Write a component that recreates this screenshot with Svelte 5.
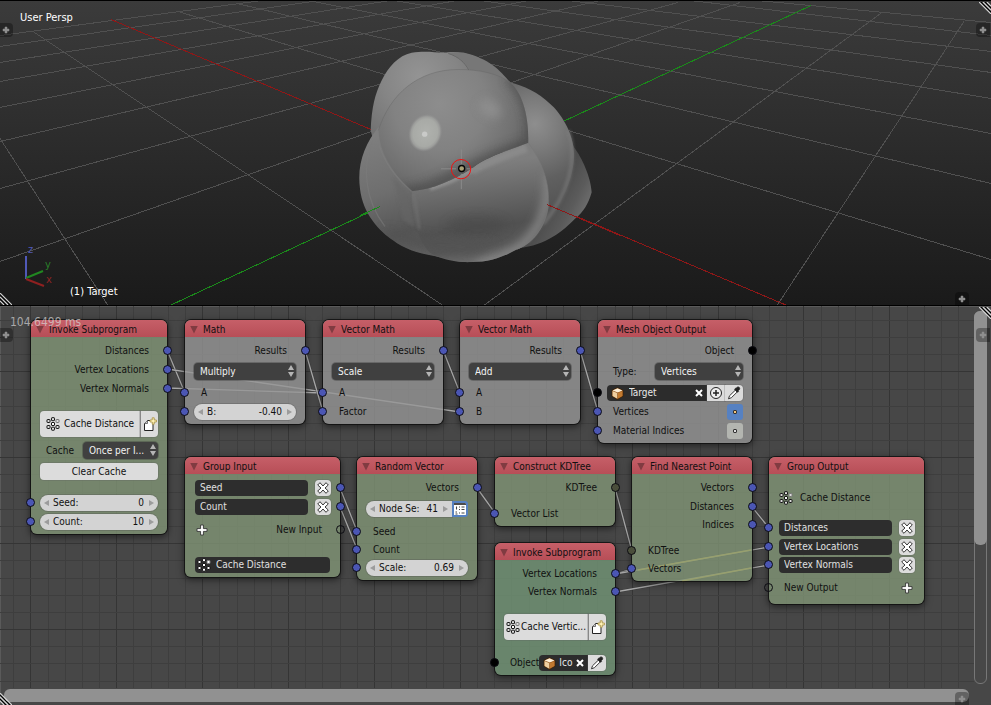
<script>
  const nodes = [
    { id: 'invoke-distance', title: 'Invoke Subprogram', x: 31, y: 14, w: 136, tone: 'green', rows: [
      { t: 'out', label: 'Distances', s: 'blue' },
      { t: 'out', label: 'Vertex Locations', s: 'blue' },
      { t: 'out', label: 'Vertex Normals', s: 'blue' },
      { t: 'program', label: 'Cache Distance', m: 14 },
      { t: 'select', label: 'Cache', value: 'Once per I...', m: 5 },
      { t: 'button', label: 'Clear Cache', m: 4 },
      { t: 'number', label: 'Seed:', value: '0', s: 'blue', m: 15 },
      { t: 'number', label: 'Count:', value: '10', s: 'blue' } ] },
    { id: 'math', title: 'Math', x: 185, y: 14, w: 120, tone: 'grey', rows: [
      { t: 'out', label: 'Results', s: 'blue' },
      { t: 'select', value: 'Multiply', m: 4 },
      { t: 'in', label: 'A', s: 'blue', m: 5 },
      { t: 'number', label: 'B:', value: '-0.40', s: 'blue' } ] },
    { id: 'vector-scale', title: 'Vector Math', x: 323, y: 14, w: 120, tone: 'grey', rows: [
      { t: 'out', label: 'Results', s: 'blue' },
      { t: 'select', value: 'Scale', m: 4 },
      { t: 'in', label: 'A', s: 'blue', m: 5 },
      { t: 'in', label: 'Factor', s: 'blue' } ] },
    { id: 'vector-add', title: 'Vector Math', x: 460, y: 14, w: 120, tone: 'grey', rows: [
      { t: 'out', label: 'Results', s: 'blue' },
      { t: 'select', value: 'Add', m: 4 },
      { t: 'in', label: 'A', s: 'blue', m: 5 },
      { t: 'in', label: 'B', s: 'blue' } ] },
    { id: 'mesh-output', title: 'Mesh Object Output', x: 598, y: 14, w: 154, tone: 'grey', rows: [
      { t: 'out', label: 'Object', s: 'black' },
      { t: 'select', label: 'Type:', value: 'Vertices', m: 4 },
      { t: 'object', value: 'Target', s: 'black', add: true, m: 5 },
      { t: 'toggle', label: 'Vertices', s: 'blue', on: true },
      { t: 'toggle', label: 'Material Indices', s: 'blue', on: false } ] },
    { id: 'group-input', title: 'Group Input', x: 185, y: 151, w: 155, tone: 'green', rows: [
      { t: 'field', value: 'Seed', out: 'blue' },
      { t: 'field', value: 'Count', out: 'blue' },
      { t: 'newin', label: 'New Input', s: 'empty', m: 7 },
      { t: 'name', value: 'Cache Distance', m: 19 } ] },
    { id: 'random-vector', title: 'Random Vector', x: 357, y: 151, w: 120, tone: 'green', rows: [
      { t: 'out', label: 'Vectors', s: 'blue' },
      { t: 'number', label: 'Node Se:', value: '41', list: true, m: 5 },
      { t: 'in', label: 'Seed', s: 'blue', m: 7 },
      { t: 'in', label: 'Count', s: 'blue', m: 2 },
      { t: 'number', label: 'Scale:', value: '0.69', s: 'blue', m: 2 } ] },
    { id: 'kdtree', title: 'Construct KDTree', x: 495, y: 151, w: 120, tone: 'green', rows: [
      { t: 'out', label: 'KDTree', s: 'olive' },
      { t: 'in', label: 'Vector List', s: 'blue', m: 10 } ] },
    { id: 'nearest', title: 'Find Nearest Point', x: 632, y: 151, w: 120, tone: 'green', rows: [
      { t: 'out', label: 'Vectors', s: 'blue' },
      { t: 'out', label: 'Distances', s: 'blue' },
      { t: 'out', label: 'Indices', s: 'blue', m: 2 },
      { t: 'in', label: 'KDTree', s: 'olive', m: 10 },
      { t: 'in', label: 'Vectors', s: 'blue', m: 2 } ] },
    { id: 'invoke-vertices', title: 'Invoke Subprogram', x: 495, y: 237, w: 120, tone: 'teal', rows: [
      { t: 'out', label: 'Vertex Locations', s: 'blue' },
      { t: 'out', label: 'Vertex Normals', s: 'blue', m: 2 },
      { t: 'program', label: 'Cache Vertic...', m: 14 },
      { t: 'object', label: 'Object', value: 'Ico', s: 'black', m: 15 } ] },
    { id: 'group-output', title: 'Group Output', x: 769, y: 151, w: 155, tone: 'green', roomy: true, rows: [
      { t: 'caption', label: 'Cache Distance', m: 13 },
      { t: 'field', value: 'Distances', s: 'blue', m: 14 },
      { t: 'field', value: 'Vertex Locations', s: 'blue' },
      { t: 'field', value: 'Vertex Normals', s: 'blue', m: 2 },
      { t: 'newout', label: 'New Output', s: 'empty', m: 7 } ] },
  ];

  // Links between sockets, in canvas coordinates: x1, y1, x2, y2
  const links = [
    [167, 44, 185, 87], [167, 63, 460, 106], [167, 82, 323, 87],
    [305, 44, 323, 106], [443, 44, 460, 87], [580, 44, 598, 106],
    [340, 182, 357, 225], [340, 201, 357, 243], [477, 182, 495, 207],
    [615, 182, 632, 245], [752, 201, 769, 222],
    [615, 268, 632, 263], [615, 268, 769, 241], [615, 286, 769, 259],
  ];

  // Stretches of a link that run underneath a node
  const covered = [[638, 264, 751, 244], [682, 275, 751, 262]];

  // Floor of the 3D view: both families of parallel lines in perspective
  const floor = [
    [0, 261, 740, 2], [0, 188, 678, 2], [0, 141, 600, 0], [0, 107, 528, 0],
    [0, 81, 457, 0], [0, 62, 390, 0], [0, 46, 319, 0], [0, 35, 262, 0],
    [777, 305, 964, 21], [443, 335, 882, 12],
    [0, 138, 108, 305], [33, 31, 330, 229], [330, 229, 443, 305], [178, 11, 991, 259],
    [237, 3, 991, 183], [308, 0, 991, 133], [394, 0, 991, 98],
    [480, 0, 991, 72], [568, 0, 991, 51], [690, 0, 991, 35], [757, 0, 991, 22],
  ];

  const step = 17.18;
  const cols = Array.from({ length: 120 }, (_, i) => ({ p: Math.round(13.2 + i * step), major: i % 5 === 1 }));
  const lines = Array.from({ length: 60 }, (_, i) => ({ p: Math.round(13.8 + i * step), major: i % 5 === 3 }));
</script>

{#snippet socket(kind, side)}
  <span class="socket {kind} {side}"></span>
{/snippet}

{#snippet tree(dark)}
  <svg class="ico" width="14" height="14" viewBox="0 0 14 14" aria-hidden="true">
    {#each [[1, 2.5], [1, 8.5], [5.5, .7], [5.5, 5.5], [5.5, 10.2], [10, 2.5], [10, 8.5]] as [x, y], i}
      <rect {x} {y} width="3" height="3" rx=".5" fill={dark || i === 3 ? '#fff' : '#ddd'} stroke={i === 5 ? '#777' : '#151515'} stroke-width="1" />
    {/each}
  </svg>
{/snippet}

{#snippet cross()}
  <svg class="ico" width="14" height="14" viewBox="0 0 14 14" aria-hidden="true">
    <path d="M4 1.7 7 5 10 1.7 12.3 4 9 7l3.3 3-2.3 2.3L7 9l-3 3.3L1.7 10 5 7 1.7 4z" fill="#fff" stroke="#222" stroke-width=".9" stroke-linejoin="round" />
  </svg>
{/snippet}

{#snippet plus()}
  <svg class="ico" width="12" height="12" viewBox="0 0 12 12" aria-hidden="true">
    <path d="M4.6 1h2.8v3.6H11v2.8H7.4V11H4.6V7.4H1V4.6h3.6z" fill="#fff" stroke="#333" stroke-width=".9" />
  </svg>
{/snippet}

{#snippet cube()}
  <svg class="ico" width="13" height="13" viewBox="0 0 13 13" aria-hidden="true">
    <path d="M6.5.8 12 3.2v6L6.5 12.4 1 9.2v-6z" fill="#8a4d16" stroke="#3a2108" stroke-width=".8" />
    <path d="M6.5 1.3 11.5 3.4 6.8 5.6 1.5 3.4z" fill="#fff0d8" />
    <path d="M1.5 3.9 6.3 6v5.7L1.5 8.9z" fill="#efcfa0" />
    <path d="M7 6.1l4.5-2.2v5L7 11.6z" fill="#c27a30" />
  </svg>
{/snippet}

{#snippet dropper()}
  <svg class="ico" width="14" height="14" viewBox="0 0 14 14" aria-hidden="true">
    <path d="M8.3 4.2 10.2 6 4.4 11.7l-2.9 1.1 1-3z" fill="#fff" stroke="#222" stroke-width=".9" />
    <path d="M9.3 1.9c1-1.2 2.3-1.3 3-.5s.5 2-.6 2.9l-.6.5.5.6-1 .9L7.5 3.2l1-.9.5.3z" fill="#222" stroke="#111" stroke-width=".6" />
  </svg>
{/snippet}

{#snippet corner(cls)}
  <svg class="corner {cls}" width="12" height="12" viewBox="0 0 12 12" aria-hidden="true">
    <path d="M0 0 12 12M4 0l8 8M8 0l4 4" stroke="#d8d8d8" stroke-width="1.1" />
    <path d="M2 0 12 10M6 0 12 6" stroke="#000" stroke-width="1" />
  </svg>
{/snippet}

{#snippet tab(cls, label)}
  <button class="tab {cls}" aria-label={label}>
    <svg width="8" height="8" viewBox="0 0 8 8" aria-hidden="true"><path d="M3 1h2v2h2v2H5v2H3V5H1V3h2z" fill="currentColor" stroke="currentColor" stroke-width=".5" /></svg>
  </button>
{/snippet}

<main>
  <section class="view" aria-label="3D view">
    <svg class="scene" viewBox="0 0 991 305" preserveAspectRatio="xMidYMid slice" aria-hidden="true">
      <defs>
        <radialGradient id="main" gradientUnits="userSpaceOnUse" cx="330" cy="220" r="310">
          <stop offset="0" stop-color="#8d8d8d" /><stop offset=".45" stop-color="#828282" />
          <stop offset=".75" stop-color="#707070" /><stop offset="1" stop-color="#5c5c5c" />
        </radialGradient>
        <radialGradient id="back" gradientUnits="userSpaceOnUse" cx="270" cy="140" r="230">
          <stop offset="0" stop-color="#949494" /><stop offset=".5" stop-color="#858585" /><stop offset="1" stop-color="#707070" />
        </radialGradient>
        <radialGradient id="right" gradientUnits="userSpaceOnUse" cx="615" cy="280" r="260">
          <stop offset="0" stop-color="#8e8e8e" /><stop offset=".3" stop-color="#7a7a7a" />
          <stop offset=".65" stop-color="#606060" /><stop offset="1" stop-color="#545454" />
        </radialGradient>
        <linearGradient id="low" gradientUnits="userSpaceOnUse" x1="400" y1="410" x2="440" y2="695">
          <stop offset="0" stop-color="#7e7e7e" /><stop offset=".3" stop-color="#696969" />
          <stop offset=".65" stop-color="#515151" /><stop offset=".85" stop-color="#575757" /><stop offset="1" stop-color="#6c6c6c" />
        </linearGradient>
        <linearGradient id="side" gradientUnits="userSpaceOnUse" x1="130" y1="320" x2="240" y2="680">
          <stop offset="0" stop-color="#7e7e7e" /><stop offset=".45" stop-color="#6e6e6e" /><stop offset=".8" stop-color="#555" /><stop offset="1" stop-color="#606060" />
        </linearGradient>
        <linearGradient id="far" gradientUnits="userSpaceOnUse" x1="640" y1="500" x2="770" y2="570">
          <stop offset="0" stop-color="#454545" /><stop offset=".6" stop-color="#5b5b5b" /><stop offset="1" stop-color="#747474" />
        </linearGradient>
        <radialGradient id="shine"><stop offset="0" stop-color="#b0b2ae" /><stop offset=".72" stop-color="#a8aaa6" /><stop offset=".85" stop-color="#9c9d9b" /><stop offset="1" stop-color="#8c8c8c" stop-opacity="0" /></radialGradient>
        <filter id="soft" x="-60%" y="-60%" width="220%" height="220%"><feGaussianBlur stdDeviation="15" /></filter>
        <filter id="edge" x="-60%" y="-30%" width="220%" height="160%"><feGaussianBlur stdDeviation="5" /></filter>
        <clipPath id="mainClip"><path d="M145 300C180 190 265 117 385 117C450 117 505 130 540 155C575 185 597 250 595 337C520 365 470 380 430 410C370 450 310 475 245 482C190 430 150 370 145 300Z" /></clipPath>
        <clipPath id="lowClip"><path d="M245 482C310 475 370 450 430 410C470 380 520 365 595 337C640 400 660 460 655 530C645 600 600 645 560 657C500 690 460 695 415 695C370 695 345 686 320 678C265 655 245 560 245 482Z" /></clipPath>
        <clipPath id="bodyClip"><path d="M145 290C105 340 80 400 90 475C98 550 150 605 190 630C220 655 270 670 320 678C370 688 390 695 415 695C460 695 500 690 560 657L600 400Z" /></clipPath>
      </defs>
      <g stroke="#505050" stroke-width="1" shape-rendering="crispEdges">
        {#each floor as [x1, y1, x2, y2]}<line {x1} {y1} {x2} {y2} />{/each}
      </g>
      <g stroke-width="1" shape-rendering="crispEdges">
        <line x1="111" y1="19" x2="787" y2="305" stroke="#8f1717" />
        <line x1="170" y1="305" x2="811" y2="5" stroke="#1a8a1a" />
      </g>
      <g transform="translate(330 30) scale(.33333)">
        <path fill="url(#far)" d="M722 325L732 350C755 380 783 440 785 485C775 520 760 545 735 565C700 600 650 645 565 653L560 500Z" />
        <path fill="url(#right)" d="M440 120C500 115 510 150 540 155C580 165 625 185 660 220C690 245 735 310 732 380C730 450 690 540 600 640L560 500Z" />
        <path d="M715 300C745 390 715 490 640 580" fill="none" stroke="#808080" stroke-width="12" filter="url(#edge)" opacity=".5" />
        <path fill="url(#back)" d="M122 300C125 230 135 190 155 150C175 110 205 75 245 67C290 60 320 68 350 66C400 60 440 78 470 97C500 115 520 140 540 155L400 300L130 330Z" />
        <path d="M350 66C385 76 405 95 420 119L540 155C510 120 480 85 400 66Z" fill="#777" />
        <path d="M355 69C385 78 405 97 416 118" fill="none" stroke="#666" stroke-width="3" />
        <path fill="url(#side)" d="M145 290C105 340 80 400 90 475C98 550 150 605 190 630C220 655 270 670 320 678C370 688 390 695 415 695L400 450L200 350Z" />
        <path d="M128 330C95 410 105 510 165 588" fill="none" stroke="#7c7c7c" stroke-width="4" opacity=".6" />
        <g clip-path="url(#lowClip)">
          <path d="M240 330H670V700H240Z" fill="url(#low)" />
          <ellipse cx="440" cy="585" rx="90" ry="28" fill="#484848" filter="url(#soft)" opacity=".6" />
          <path d="M300 474C360 454 390 442 425 418" stroke="#a0a0a0" stroke-width="14" fill="none" filter="url(#edge)" opacity=".6" />
          <path d="M425 422C480 388 530 375 590 352" stroke="#959595" stroke-width="26" fill="none" filter="url(#edge)" opacity=".5" />
          <path d="M657 430C660 580 590 680 440 699" stroke="#888" stroke-width="26" fill="none" filter="url(#soft)" />
        </g>
        <g clip-path="url(#bodyClip)">
          <path d="M150 595C240 600 300 625 350 620L500 640L450 672C330 672 230 650 190 620Z" fill="#525252" filter="url(#soft)" opacity=".8" />
          <path d="M190 440L236 490L256 590L220 570Z" fill="#666" filter="url(#edge)" opacity=".6" />
          <path d="M252 490L268 596" stroke="#747474" stroke-width="8" fill="none" filter="url(#edge)" opacity=".6" />
        </g>
        <g clip-path="url(#mainClip)">
          <path d="M130 100H610V500H130Z" fill="url(#main)" />
          <path d="M535 140C600 210 610 280 598 340" fill="none" stroke="#4b4b4b" stroke-width="24" filter="url(#soft)" opacity=".75" />
          <path d="M220 488C340 476 410 396 600 341" fill="none" stroke="#444" stroke-width="36" filter="url(#soft)" opacity=".65" />
          <ellipse cx="480" cy="235" rx="36" ry="24" fill="#919191" filter="url(#soft)" opacity=".8" transform="rotate(35 480 235)" />
        </g>
        <path d="M145 300C180 190 265 117 385 117C450 117 505 130 540 155" fill="none" stroke="#666" stroke-width="3" opacity=".45" />
        <path d="M148 345C165 400 195 440 245 482" fill="none" stroke="#808080" stroke-width="4" opacity=".5" />
        <path d="M595 337C640 400 660 460 655 530C645 590 610 635 560 657" fill="none" stroke="#777" stroke-width="3" opacity=".6" />
        <ellipse cx="286" cy="307" rx="50" ry="58" fill="url(#shine)" transform="rotate(22 286 307)" />
        <circle cx="284" cy="311" r="8" fill="#c9cac8" />
        <path d="M333 415H378M410 415H456M394 357V402M394 430V476" stroke="#8b8b8b" stroke-width="3" />
        <circle cx="393" cy="416" r="29" fill="none" stroke="#f01010" stroke-width="3" />
        <circle cx="395" cy="414" r="9" fill="#a8a078" stroke="#050505" stroke-width="4" />
      </g>
      <g stroke-width="1" shape-rendering="crispEdges">
        <line x1="360" y1="215" x2="380" y2="206" stroke="#1a8a1a" />
        <line x1="547" y1="204" x2="620" y2="235" stroke="#8f1717" />
      </g>
    </svg>
    <span class="persp">User Persp</span>
    <svg class="axes" width="34" height="48" viewBox="0 -4 34 48" aria-hidden="true">
      <path d="M6 11v23" stroke="#5059b8" stroke-width="2" />
      <path d="m6 33 17-7" stroke="#218721" stroke-width="2" />
      <path d="m6 34 18 7" stroke="#8f2020" stroke-width="2" />
      <text x="8" y="8" fill="#5059b8">z</text>
      <text x="25" y="23" fill="#2a802a">y</text>
      <text x="26" y="38" fill="#8f2525">x</text>
    </svg>
    <span class="target">(1) Target</span>
    {@render tab('left', 'Open tools')}
    {@render tab('right', 'Open properties')}
    {@render tab('foot', 'Open header')}
    {@render corner('ne')}
    {@render corner('sw')}
  </section>

  <section class="editor" aria-label="Node editor">
    <svg class="wires" aria-hidden="true">
      <g shape-rendering="crispEdges">
        {#each cols as c}<line x1={c.p} x2={c.p} y1="0" y2="100%" stroke={c.major ? '#353535' : '#3e3e3e'} />{/each}
        {#each lines as l}<line y1={l.p} y2={l.p} x1="0" x2="100%" stroke={l.major ? '#353535' : '#3e3e3e'} />{/each}
      </g>
      {#each links as [x1, y1, x2, y2]}
        <line {x1} {y1} {x2} {y2} stroke="#333" stroke-width="2.5" opacity=".5" />
        <line {x1} {y1} {x2} {y2} stroke="#aaa" stroke-width="1.3" />
      {/each}
      {#each covered as [x1, y1, x2, y2]}
        <line {x1} {y1} {x2} {y2} stroke="#f0c850" stroke-width="1.5" />
      {/each}
    </svg>

    {#each nodes as n (n.id)}
      <article class="node {n.tone}" class:roomy={n.roomy} style="left:{n.x}px;top:{n.y}px;width:{n.w}px">
        <h2><i></i>{n.title}</h2>
        <div class="body">
          {#each n.rows as r, i}
            {@const id = n.id + '-' + i}
            <div class="row {r.t} m{r.m ?? 3}">
              {#if r.t === 'out'}
                <span>{r.label}</span>
              {:else if r.t === 'in'}
                <span>{r.label}</span>
              {:else if r.t === 'program'}
                <button class="light big">{@render tree(false)}<span>{r.label}</span></button>
                <button class="light new" aria-label="New subprogram">
                  <svg class="ico" width="14" height="15" viewBox="0 0 14 15" aria-hidden="true">
                    <path d="M4.5 3.5H10V13.5H1.5V6.5z" fill="#fff" stroke="#222" />
                    <path d="M4.5 3.5v3h-3" fill="#ccc" stroke="#555" stroke-width=".8" />
                    <path d="M9.2.8h2v2.2h2.2v2h-2.2v2.2h-2V5H7V3h2.2z" fill="#fff3b8" stroke="#a58d3c" stroke-width=".8" />
                  </svg>
                </button>
              {:else if r.t === 'select'}
                {#if r.label}<label for={id}>{r.label}</label>{/if}
                <span class="drop" class:grow={!r.label} class:wide={r.label === 'Type:'}>
                  <select {id} aria-label={r.label ?? 'Operation'}><option>{r.value}</option></select>
                  <svg width="8" height="12" viewBox="0 0 8 12" aria-hidden="true"><path d="M4 0 7 5H1zM4 12 1 7h6z" fill="#b5b5b5" /></svg>
                </span>
              {:else if r.t === 'button'}
                <button class="light">{r.label}</button>
              {:else if r.t === 'number'}
                <span class="num" class:joined={r.list}>
                  <i class="lt"></i>
                  <label for={id}>{r.label}</label>
                  <input {id} type="text" inputmode="decimal" value={r.value} />
                  <i class="gt"></i>
                </span>
                {#if r.list}
                  <button class="listing" aria-label="Seed options">
                    <svg class="ico" width="12" height="12" viewBox="0 0 12 12" aria-hidden="true">
                      <rect width="12" height="12" fill="#fff" />
                      <path d="M0 1h12" stroke="#111" stroke-width="1.5" />
                      <path d="M2.5 3.5v3M1.5 9h1.5M1.5 11h2M5 4h1M7.5 4h3M5 6.5h1M7.5 6.5h3M5 10h1M7.5 10h3" stroke="#444" stroke-width="1.1" />
                    </svg>
                  </button>
                {/if}
              {:else if r.t === 'object'}
                {#if r.label}<label for={id}>{r.label}</label>{/if}
                <span class="pick">
                  {@render cube()}
                  <input {id} type="text" value={r.value} aria-label={r.label ?? 'Object'} />
                  <button class="clear" aria-label="Clear object"><svg width="8" height="8" viewBox="0 0 8 8" aria-hidden="true"><path d="m1 1 6 6M7 1 1 7" stroke="#fff" stroke-width="2" /></svg></button>
                </span>
                {#if r.add}
                  <button class="light tool" aria-label="Create object">
                    <svg width="14" height="14" viewBox="0 0 14 14" aria-hidden="true"><circle cx="7" cy="7" r="5.5" fill="#eee" stroke="#222" /><path d="M7 4v6M4 7h6" stroke="#222" stroke-width="1.5" /></svg>
                  </button>
                {/if}
                <button class="light tool last" aria-label="Pick object">{@render dropper()}</button>
              {:else if r.t === 'toggle'}
                <span>{r.label}</span>
                <button class="dot" class:on={r.on} aria-label="Use {r.label}" aria-pressed={r.on}><i></i></button>
              {:else if r.t === 'field'}
                <input type="text" value={r.value} aria-label="Socket name" />
                <button class="light remove" aria-label="Remove {r.value}">{@render cross()}</button>
              {:else if r.t === 'newin'}
                <button class="bare" aria-label="Add input">{@render plus()}</button>
                <span>{r.label}</span>
              {:else if r.t === 'newout'}
                <span>{r.label}</span>
                <button class="bare" aria-label="Add output">{@render plus()}</button>
              {:else if r.t === 'name'}
                <span class="titled">{@render tree(true)}<input type="text" value={r.value} aria-label="Subprogram name" /></span>
              {:else}
                {@render tree(false)}<span>{r.label}</span>
              {/if}
              {#if r.out}{@render socket(r.out, 'r')}{/if}
              {#if r.s}{@render socket(r.s, r.t === 'out' || r.t === 'newin' ? 'r' : 'l')}{/if}
            </div>
          {/each}
        </div>
      </article>
    {/each}

    <output class="time">104.6499 ms</output>
    <div class="vbar"><div></div></div>
    <div class="hbar"></div>
    {@render tab('left', 'Open tool shelf')}
    {@render tab('right', 'Open sidebar')}
    {@render tab('foot', 'Open footer')}
    {@render corner('ne')}
    {@render corner('sw')}
  </section>
</main>

<style>
  :global(body) { margin: 0; background: #464646; }
  main {
    display: flex; flex-direction: column; height: 100vh; min-height: 705px;
    font: 10px/16px "DejaVu Sans Condensed", "DejaVu Sans", sans-serif; color: #101010; overflow: hidden;
  }
  button, input, select { font: inherit; color: inherit; margin: 0; padding: 0; border: 0; background: none; min-width: 0; box-sizing: border-box; }
  .view {
    position: relative; flex: 0 0 304px; overflow: hidden; border-top: 1px solid #000; border-bottom: 1px solid #000;
    background: linear-gradient(#3b3b3b, #1a1a1a); color: #fff; box-sizing: content-box;
  }
  .scene { display: block; width: 100%; height: 100%; }
  .persp, .target, .axes { position: absolute; white-space: nowrap; font-size: 11px; }
  .persp { left: 20px; top: 9px; }
  .target { left: 70px; bottom: 5px; }
  .axes { left: 20px; bottom: 16px; overflow: visible; }
  .tab {
    position: absolute; width: 14px; height: 14px; display: flex; align-items: center; justify-content: center;
    background: rgba(0, 0, 0, .32); color: #8f8f8f; border-radius: 4px;
  }
  .tab.left { left: -1px; top: 22px; border-radius: 0 4px 4px 0; }
  .tab.right { right: 1px; top: 22px; border-radius: 4px 0 0 4px; }
  .tab.foot { right: 22px; bottom: -1px; border-radius: 4px 4px 0 0; }
  .corner { position: absolute; }
  .ne { right: 0; top: 1px; }
  .sw { left: 0; bottom: 0; transform: rotate(180deg); }

  .editor { position: relative; flex: 1; overflow: hidden; background: #474747; box-shadow: inset 1px 1px #5a5a5a; }
  .wires { position: absolute; inset: 0 17px 17px 0; width: calc(100% - 17px); height: calc(100% - 17px); }
  .node {
    position: absolute; border-radius: 6px; background: rgba(149, 149, 149, .8);
    box-shadow: 0 0 0 1px rgba(15, 15, 15, .8), 0 2px 7px 1px rgba(0, 0, 0, .5);
  }
  .green { background: rgba(129, 149, 118, .8); }
  .teal { background: rgba(114, 149, 118, .8); }
  h2 {
    display: flex; align-items: center; gap: 5px; height: 17px; margin: 0; padding: 2px 0 0 5px; box-sizing: border-box;
    font: inherit; white-space: nowrap; border-radius: 6px 6px 0 0; background: linear-gradient(#c65f68, #b74e57);
  }
  h2 i { width: 8px; height: 8px; background: #803b41; clip-path: polygon(0 0, 100% 0, 50% 100%); }
  .body { display: flex; flex-direction: column; padding: 3px 0 4px; }
  .roomy .body { padding-bottom: 8px; }
  .row { position: relative; display: flex; align-items: center; height: 16px; padding: 0 9px; white-space: nowrap; }
  .m2 { margin-top: 2px; }
  .m3 { margin-top: 3px; }
  .m4 { margin-top: 4px; }
  .m5 { margin-top: 5px; }
  .m7 { margin-top: 7px; }
  .m10 { margin-top: 10px; }
  .m13 { margin-top: 13px; }
  .m14 { margin-top: 14px; }
  .m15 { margin-top: 15px; }
  .m19 { margin-top: 19px; }
  .out { justify-content: flex-end; padding-right: 18px; }
  .in { padding-left: 16px; }
  .program { height: 26px; }
  .select, .button { height: 17px; }
  .caption { padding-left: 10px; gap: 7px; }

  .socket { position: absolute; top: 3px; width: 9px; height: 9px; box-sizing: border-box; border: 1px solid #0c0c12; border-radius: 50%; }
  .l { left: -5px; }
  .r { right: -5px; }
  .blue { background: #4b56b4; }
  .black { background: #000; }
  .olive { background: #4a4e3b; }

  .light { background: #dcdcdc; border-radius: 4px; height: 100%; box-shadow: 0 0 0 1px rgba(90, 90, 90, .25); display: flex; align-items: center; justify-content: center; }
  .button .light { flex: 1; }
  .ico { flex: none; display: block; }
  .big { flex: 1; gap: 4px; border-radius: 4px 0 0 4px; overflow: hidden; }
  .teal .big { gap: 1px; }
  .new { width: 18px; border-radius: 0 4px 4px 0; border-left: 1px solid #888; }
  .drop { position: relative; width: 75px; height: 17px; margin-left: auto; background: #404040; color: #f2f2f2; border-radius: 4px; box-shadow: 0 0 0 1px rgba(40, 40, 40, .3); }
  .grow { width: 100%; }
  .wide { width: 88px; }
  .drop select { appearance: none; display: block; width: 100%; height: 100%; padding: 0 14px 0 6px; }
  .drop svg { position: absolute; right: 1px; top: 2px; pointer-events: none; }
  .select label { padding-left: 6px; }
  .num { display: flex; align-items: center; flex: 1; min-width: 0; height: 16px; padding: 0 4px; border-radius: 8px; background: #d3d3d3; box-shadow: 0 0 0 1px rgba(80, 80, 80, .3); }
  .num label { margin-left: 4px; }
  .num input { flex: 1; width: 0; text-align: right; margin-right: 5px; }
  .num i { border: 3px solid transparent; flex: none; }
  .num .lt { border-right: 5px solid #9c9c9c; border-left: 0; }
  .num .gt { border-left: 5px solid #9c9c9c; border-right: 0; }
  .joined { border-radius: 8px 0 0 8px; }
  .listing { width: 16px; height: 16px; display: flex; align-items: center; justify-content: center; background: #ddd; border: 2px solid #5681c2; border-radius: 0 3px 3px 0; overflow: hidden; }

  .pick { display: flex; align-items: center; flex: 1; min-width: 0; height: 16px; padding: 0 4px; gap: 5px; background: #2c2c2c; color: #e8e8e8; border-radius: 4px 0 0 4px; }
  .pick input { flex: 1; width: 0; }
  .clear { display: flex; width: 8px; height: 8px; }
  .object label { padding-left: 6px; }
  .teal .pick { gap: 3px; }
  .tool { width: 18px; border-radius: 0; }
  .last { border-radius: 0 4px 4px 0; }
  .toggle { justify-content: space-between; padding-left: 15px; }
  .dot { width: 16px; height: 16px; border-radius: 3px; background: #b3b5b0; display: flex; align-items: center; justify-content: center; }
  .dot i { width: 4px; height: 4px; box-sizing: border-box; border: 1px solid #333; background: #ddd; border-radius: 1px; }
  .dot.on { background: #5681c2; }
  .dot.on i { background: #f2c47c; }
  .field { gap: 7px; padding: 0 9px 0 10px; }
  .field input { flex: 1; height: 16px; padding: 0 5px; background: #2d2d2d; color: #e0e0e0; border-radius: 4px; }
  .remove { width: 16px; }
  .newin { justify-content: space-between; padding: 0 18px 0 11px; }
  .newout { justify-content: space-between; padding: 0 11px 0 15px; }
  .bare { display: flex; }
  .name { padding: 0 10px; }
  .titled { flex: 1; min-width: 0; display: flex; align-items: center; gap: 5px; height: 16px; padding: 0 2px; background: #2d2d2d; color: #e0e0e0; border-radius: 4px; }
  .titled input { flex: 1; width: 0; }

  .time { position: absolute; left: 10px; top: 8px; font-size: 12px; color: rgba(215, 215, 215, .7); }
  .vbar { position: absolute; right: 4px; top: 5px; bottom: 21px; width: 13px; box-sizing: border-box; border: 1px solid #777; border-radius: 6px; }
  .vbar div { height: 63%; margin: -1px; background: #919191; border-radius: 6px; }
  .hbar { position: absolute; left: 4px; right: 22px; bottom: 3px; height: 13px; background: #919191; border-radius: 6px; }
</style>
